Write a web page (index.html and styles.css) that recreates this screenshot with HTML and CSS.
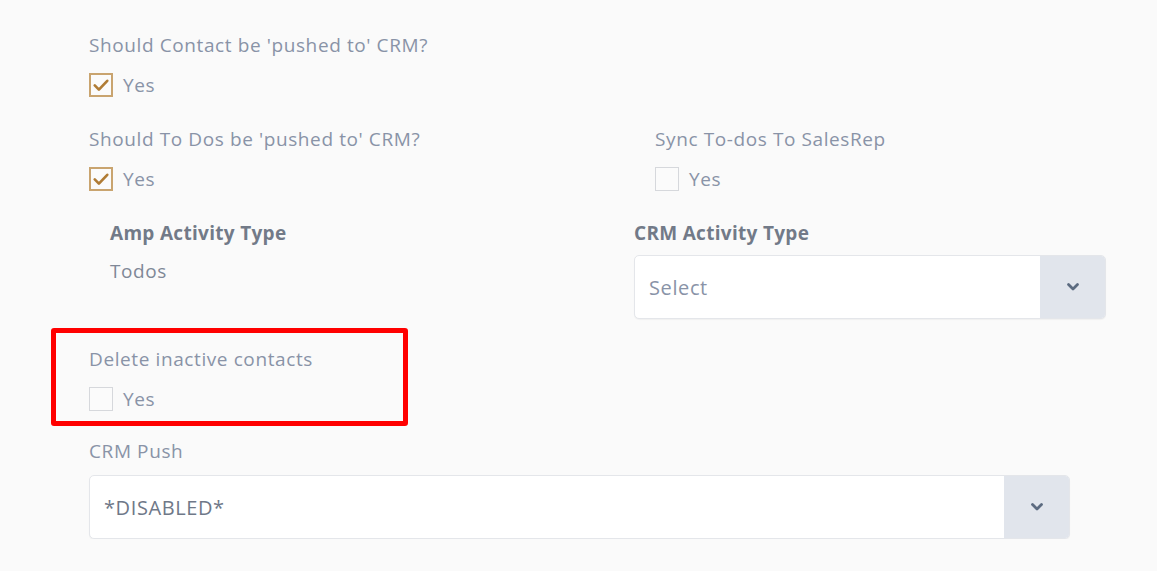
FILE: index.html
```html
<!DOCTYPE html>
<html>
<head>
<meta charset="utf-8">
<link rel="stylesheet" href="styles.css">
</head>
<body>
<div class="page">
  <div class="field">
    <div class="label">Should Contact be 'pushed to' CRM?</div>
    <label class="check"><span class="box checked"><svg viewBox="0 0 24 24" width="22" height="22"><path d="M4.5 12.5l5 5L19.5 7" fill="none" stroke="#b07c35" stroke-width="3.2" stroke-linecap="round" stroke-linejoin="round"/></svg></span><span class="yes">Yes</span></label>
  </div>
  <div class="field two">
    <div>
      <div class="label">Should To Dos be 'pushed to' CRM?</div>
      <label class="check"><span class="box checked"><svg viewBox="0 0 24 24" width="22" height="22"><path d="M4.5 12.5l5 5L19.5 7" fill="none" stroke="#b07c35" stroke-width="3.2" stroke-linecap="round" stroke-linejoin="round"/></svg></span><span class="yes">Yes</span></label>
    </div>
    <div>
      <div class="label">Sync To-dos To SalesRep</div>
      <label class="check"><span class="box"></span><span class="yes">Yes</span></label>
    </div>
  </div>
  <div class="activity">
    <div>
      <div class="blabel">Amp Activity Type</div>
      <div class="value">Todos</div>
    </div>
    <div>
      <div class="blabel">CRM Activity Type</div>
      <div class="select sel-crm">
        <span class="sel-text light">Select</span>
        <span class="sel-btn"><svg viewBox="0 0 14 10" width="14" height="10"><path d="M2.5 2.5l4.5 4.5 4.5-4.5" fill="none" stroke="#5c6b80" stroke-width="2.8" stroke-linecap="round" stroke-linejoin="round"/></svg></span>
      </div>
    </div>
  </div>
  <div class="highlight">
    <div class="label">Delete inactive contacts</div>
    <label class="check"><span class="box"></span><span class="yes">Yes</span></label>
  </div>
  <div class="push">
    <div class="label">CRM Push</div>
    <div class="select sel-push">
      <span class="sel-text dark">*DISABLED*</span>
      <span class="sel-btn"><svg viewBox="0 0 14 10" width="14" height="10"><path d="M2.5 2.5l4.5 4.5 4.5-4.5" fill="none" stroke="#5c6b80" stroke-width="2.8" stroke-linecap="round" stroke-linejoin="round"/></svg></span>
    </div>
  </div>
</div>
</body>
</html>
```
FILE: styles.css
```css
html, body {
  margin: 0;
  padding: 0;
  background: #fafafa;
}
body {
  font-family: "Open Sans", "Noto Sans", sans-serif;
  font-size: 19px;
}
.page {
  padding: 33px 0 0 89px;
  width: 1017px;
}
.field {
  margin-bottom: 30px;
}
.two {
  display: grid;
  grid-template-columns: 566px 1fr;
}
.label {
  font-size: 19px;
  letter-spacing: 0.6px;
  line-height: 24px;
  color: #8993a7;
  margin-bottom: 16px;
  white-space: nowrap;
}
.check {
  display: flex;
  align-items: center;
  gap: 10px;
  height: 24px;
}
.box {
  box-sizing: border-box;
  width: 24px;
  height: 24px;
  border: 1.5px solid #d6d8dc;
  background: #fbfbfb;
  display: flex;
  align-items: center;
  justify-content: center;
}
.box.checked {
  border: 2px solid #c9a46f;
}
.yes {
  color: #8993a7;
  font-size: 19px;
  letter-spacing: 0.6px;
  line-height: 24px;
}
.activity {
  display: grid;
  grid-template-columns: 524px 472px;
  padding-left: 21px;
}
.blabel {
  font-weight: 700;
  color: #727a88;
  font-size: 19px;
  letter-spacing: 0.3px;
  line-height: 24px;
  white-space: nowrap;
}
.value {
  margin-top: 14px;
  color: #7f8897;
  letter-spacing: 0.6px;
  line-height: 24px;
}
.select {
  box-sizing: border-box;
  height: 64px;
  display: flex;
  background: #fff;
  border: 1px solid #e4e6ea;
  border-radius: 5px;
  overflow: hidden;
  box-shadow: 0 1px 1px rgba(0,0,0,0.04);
}
.sel-crm {
  margin-top: 10px;
}
.sel-text {
  flex: 1;
  display: flex;
  align-items: center;
  padding-left: 14px;
  font-size: 20px;
  letter-spacing: 0.6px;
}
.sel-text.light { color: #8993a7; }
.sel-text.dark { color: #6f7888; }
.sel-btn {
  width: 65px;
  background: #e1e5ec;
  display: flex;
  align-items: center;
  justify-content: center;
}
.highlight {
  margin: 9px 0 0 -38px;
  width: 357px;
  box-sizing: border-box;
  border: 5px solid #ff0000;
  border-radius: 3px;
  padding: 14px 0 10px 33px;
}
.push {
  margin-top: 13px;
}
.push .label {
  margin-bottom: 12px;
}
.sel-push {
  width: 981px;
}
```
